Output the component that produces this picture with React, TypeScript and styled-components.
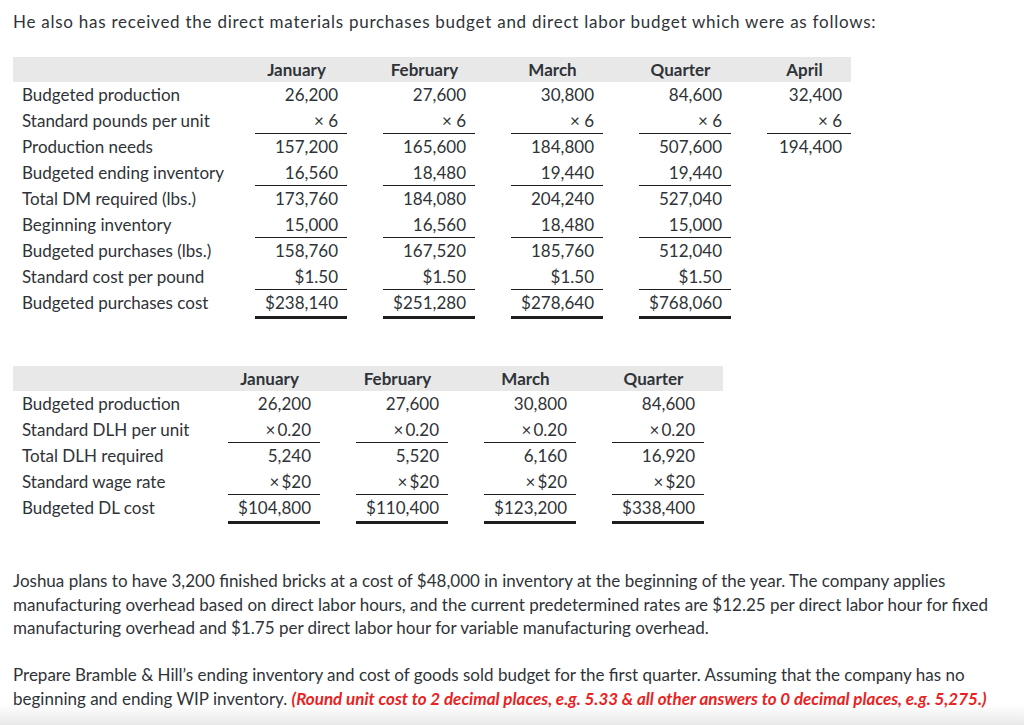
import React from "react";
import styled, { createGlobalStyle } from "styled-components";

const Global = createGlobalStyle`
  html, body { margin: 0; padding: 0; }
  html {
    min-height: 725px;
    background: linear-gradient(to bottom, #ffffff 0px, #ffffff 704px, #e9e9e9 725px) no-repeat;
    background-size: 100% 725px;
  }
  body {
    font-family: Lato, "Open Sans", "Liberation Sans", sans-serif;
    color: #2f3338;
    font-size: 17px;
  }
`;

const Page = styled.div`
  padding: 10px 13px 0 13px;
  display: flex;
  flex-direction: column;
`;

const Intro = styled.p`
  margin: 0;
  line-height: 24px;
  font-size: 17px;
  letter-spacing: 0.75px;
`;

const Table = styled.div<{ $cols: string; $mt: number }>`
  display: grid;
  grid-template-columns: ${(p) => p.$cols};
  margin-top: ${(p) => p.$mt}px;
  align-self: flex-start;
`;

const HeadCell = styled.div`
  background: #e8e8e8;
  height: 25px;
  padding-left: 36px;
  display: flex;
`;

const HeadLabel = styled.div`
  background: #e8e8e8;
  height: 25px;
`;

const HeadText = styled.div`
  flex: 1;
  padding-right: 9px;
  text-align: center;
  font-weight: 700;
  line-height: 25px;
  white-space: nowrap;
`;

type Rule = "none" | "single" | "double";

const Label = styled.div<{ $rule: Rule }>`
  height: ${(p) => (p.$rule === "double" ? 29 : 26)}px;
  padding-left: 9px;
  line-height: 26px;
  white-space: nowrap;
`;

const ValueCell = styled.div<{ $rule: Rule }>`
  padding-left: 36px;
  height: ${(p) => (p.$rule === "double" ? 29 : 26)}px;
  display: flex;
  align-items: flex-start;
`;

const Value = styled.div<{ $rule: Rule }>`
  flex: 1;
  box-sizing: border-box;
  height: ${(p) => (p.$rule === "double" ? 29 : 26)}px;
  padding-right: 9px;
  text-align: right;
  line-height: 26px;
  white-space: nowrap;
  border-bottom: ${(p) =>
    p.$rule === "single" ? "1px solid #1e1e1e" : p.$rule === "double" ? "3px solid #1e1e1e" : "none"};
`;

const Spacer = styled.div<{ $head?: boolean }>`
  background: ${(p) => (p.$head ? "#e8e8e8" : "transparent")};
`;

const Para = styled.p<{ $mt: number }>`
  margin: ${(p) => p.$mt}px 0 0 0;
  font-size: 17px;
  line-height: 23.5px;
  max-width: 998px;
`;

const Note = styled.span`
  color: #e8231f;
  font-weight: 700;
  font-style: italic;
`;

type Row = { label: string; values: string[]; rules: Rule[] };

const dmHeads = ["January", "February", "March", "Quarter", "April"];
const dmRows: Row[] = [
  { label: "Budgeted production", values: ["26,200", "27,600", "30,800", "84,600", "32,400"], rules: ["none", "none", "none", "none", "none"] },
  { label: "Standard pounds per unit", values: ["× 6", "× 6", "× 6", "× 6", "× 6"], rules: ["single", "single", "single", "single", "single"] },
  { label: "Production needs", values: ["157,200", "165,600", "184,800", "507,600", "194,400"], rules: ["none", "none", "none", "none", "none"] },
  { label: "Budgeted ending inventory", values: ["16,560", "18,480", "19,440", "19,440", ""], rules: ["single", "single", "single", "single", "none"] },
  { label: "Total DM required (lbs.)", values: ["173,760", "184,080", "204,240", "527,040", ""], rules: ["none", "none", "none", "none", "none"] },
  { label: "Beginning inventory", values: ["15,000", "16,560", "18,480", "15,000", ""], rules: ["single", "single", "single", "single", "none"] },
  { label: "Budgeted purchases (lbs.)", values: ["158,760", "167,520", "185,760", "512,040", ""], rules: ["none", "none", "none", "none", "none"] },
  { label: "Standard cost per pound", values: ["$1.50", "$1.50", "$1.50", "$1.50", ""], rules: ["single", "single", "single", "single", "none"] },
  { label: "Budgeted purchases cost", values: ["$238,140", "$251,280", "$278,640", "$768,060", ""], rules: ["double", "double", "double", "double", "none"] },
];

const dlHeads = ["January", "February", "March", "Quarter"];
const dlRows: Row[] = [
  { label: "Budgeted production", values: ["26,200", "27,600", "30,800", "84,600"], rules: ["none", "none", "none", "none"] },
  { label: "Standard DLH per unit", values: ["×\u20090.20", "×\u20090.20", "×\u20090.20", "×\u20090.20"], rules: ["single", "single", "single", "single"] },
  { label: "Total DLH required", values: ["5,240", "5,520", "6,160", "16,920"], rules: ["none", "none", "none", "none"] },
  { label: "Standard wage rate", values: ["×\u2009$20", "×\u2009$20", "×\u2009$20", "×\u2009$20"], rules: ["single", "single", "single", "single"] },
  { label: "Budgeted DL cost", values: ["$104,800", "$110,400", "$123,200", "$338,400"], rules: ["double", "double", "double", "double"] },
];

function BudgetTable({
  heads,
  rows,
  cols,
  mt,
  spacer,
}: {
  heads: string[];
  rows: Row[];
  cols: string;
  mt: number;
  spacer?: boolean;
}) {
  return (
    <Table $cols={cols} $mt={mt}>
      <HeadLabel />
      {heads.map((h) => (
        <HeadCell key={h}>
          <HeadText>{h}</HeadText>
        </HeadCell>
      ))}
      {spacer && <Spacer $head />}
      {rows.map((r) => {
        const rowRule: Rule = r.rules.includes("double") ? "double" : "none";
        return (
          <React.Fragment key={r.label}>
            <Label $rule={rowRule}>{r.label}</Label>
            {r.values.map((v, i) => (
              <ValueCell key={i} $rule={rowRule}>
                <Value $rule={r.rules[i]}>{v}</Value>
              </ValueCell>
            ))}
            {spacer && <Spacer />}
          </React.Fragment>
        );
      })}
    </Table>
  );
}

export default function App() {
  return (
    <>
      <Global />
      <Page>
        <Intro>
          He also has received the direct materials purchases budget and direct labor budget which were as follows:
        </Intro>
        <BudgetTable
          heads={dmHeads}
          rows={dmRows}
          cols="206px 128px 128px 128px 128px 120px"
          mt={23}
        />
        <BudgetTable
          heads={dlHeads}
          rows={dlRows}
          cols="179px 128px 128px 128px 128px 19px"
          mt={47}
          spacer
        />
        <Para $mt={45}>
          Joshua plans to have 3,200 finished bricks at a cost of $48,000 in inventory at the beginning of the year. The
          company applies manufacturing overhead based on direct labor hours, and the current predetermined rates are
          $12.25 per direct labor hour for fixed manufacturing overhead and $1.75 per direct labor hour for variable
          manufacturing overhead.
        </Para>
        <Para $mt={23.5}>
          Prepare Bramble &amp; Hill’s ending inventory and cost of goods sold budget for the first quarter. Assuming that
          the company has no beginning and ending WIP inventory.{" "}
          <Note>
            (Round unit cost to 2 decimal places, e.g. 5.33 &amp; all other answers to 0 decimal places, e.g. 5,275.)
          </Note>
        </Para>
      </Page>
    </>
  );
}
